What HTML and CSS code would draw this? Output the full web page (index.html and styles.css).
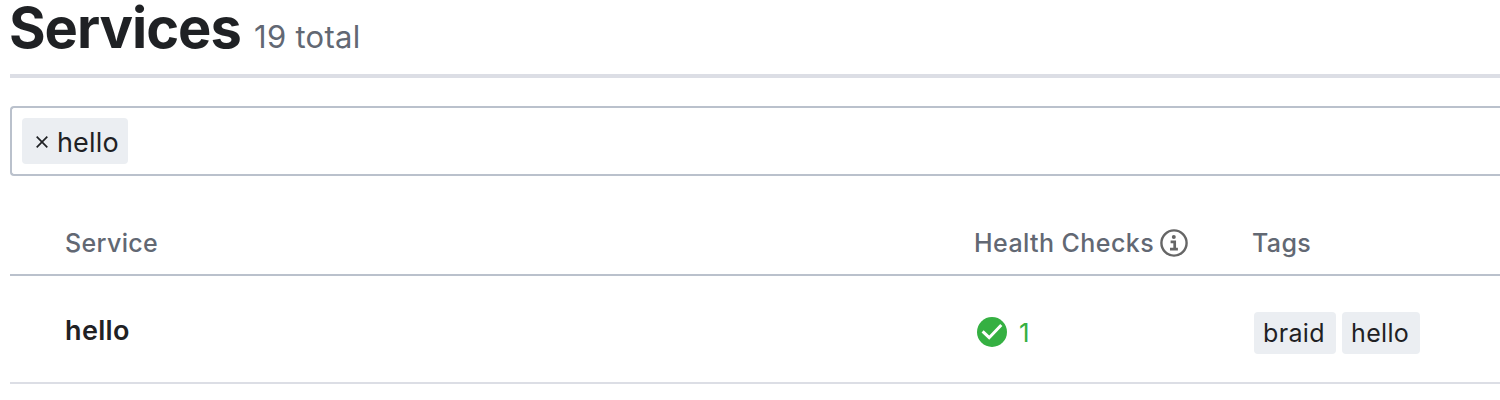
FILE: index.html
```html
<!DOCTYPE html>
<html lang="en">
<head>
<meta charset="utf-8">
<title>Services</title>
<link rel="stylesheet" href="styles.css">
</head>
<body>
<main class="page">
  <header class="header"><h1 class="title">Services</h1><span class="total">19 total</span></header>
  <div class="search"><span class="token"><svg class="remove" viewBox="0 0 12 12"><path d="M.7.7l10.6 10.6M11.3.7L.7 11.3"/></svg><span class="token-text">hello</span></span></div>
  <div class="row head">
    <span class="service">Service</span>
    <span class="health"><span class="th-health">Health Checks</span><svg class="info" viewBox="0 0 28 28"><circle cx="14" cy="14" r="12.6"/><path class="stem" d="M10.6 12.8h4.1v7.2M10 20.2h7.9"/><circle class="dot" cx="13.8" cy="7.9" r="2"/></svg></span>
    <span class="tags th-tags">Tags</span>
  </div>
  <div class="row item">
    <span class="name">hello</span>
    <span class="health"><svg class="check" viewBox="0 0 30 30"><circle cx="15" cy="15" r="15"/><path d="M5.6 14.3l6.6 6.4L24.3 8"/></svg><span class="count">1</span></span>
    <span class="tags"><span class="tag">braid</span><span class="tag tag-second">hello</span></span>
  </div>
</main>
</body>
</html>
```
FILE: styles.css
```css
* { box-sizing: border-box; }
body { margin: 0; background: #fff; color: #1f2124; font-family: Inter, "Liberation Sans", sans-serif; overflow: hidden; }
svg { display: block; flex: none; }
.page { height: 400px; padding-left: 10px; overflow: hidden; }
.header { height: 78px; border-bottom: 4px solid #dcdee5; display: flex; align-items: baseline; white-space: nowrap; }
.title { margin: 0 0 0 -1px; font-size: 56px; line-height: 56px; font-weight: 700; letter-spacing: -1.05px; width: 245px; }
.total { font-size: 31px; letter-spacing: 0.3px; color: #626873; }
.search { height: 70px; margin-top: 28px; border: 2px solid #bac1cc; border-right: 0; border-radius: 4px 0 0 4px; padding: 10px; }
.token { display: flex; align-items: center; width: 106px; height: 46px; background: #ebeef2; border-radius: 4px; padding: 2px 0 0 14px; }
.remove { width: 12px; height: 12px; fill: none; stroke: #1f2124; stroke-width: 1.7; }
.token-text { margin-left: 9px; font-size: 27px; letter-spacing: 0.15px; }
.row { display: grid; grid-template-columns: 909px 279px 1fr; padding-left: 55px; align-items: center; }
.head { height: 68px; margin-top: 32px; padding-top: 3px; border-bottom: 2px solid #bac1cc; color: #626873; font-size: 25px; font-weight: 500; letter-spacing: 0.35px; }
.item { height: 108px; padding-top: 1px; border-bottom: 2px solid #dcdee5; }
.health, .tags { display: flex; align-items: center; }
.item .tags { padding-top: 7px; }
.item .health { padding-top: 5px; }
.th-health { width: 180px; white-space: nowrap; letter-spacing: 0.42px; }
.th-tags { margin-left: -1px; }
.info { width: 28px; height: 28px; margin-left: 6px; fill: none; stroke: #666; stroke-width: 2.4; }
.info .stem { stroke-width: 2.7; }
.info .dot { fill: #666; stroke: none; }
.name { padding-top: 2px; font-size: 27px; font-weight: 600; letter-spacing: 0.35px; }
.check { width: 30px; height: 30px; margin-left: 3px; fill: #35b042; }
.check path { fill: none; stroke: #fff; stroke-width: 3; }
.count { font-size: 26px; color: #35b042; margin: 0 0 0 12px; }
.tag { height: 42px; width: 82px; padding-left: 9px; display: flex; align-items: center; background: #ebeef2; border-radius: 4px; font-size: 25px; letter-spacing: 0.35px; margin-left: 1px; }
.tag-second { width: 78px; margin-left: 6px; }
```
